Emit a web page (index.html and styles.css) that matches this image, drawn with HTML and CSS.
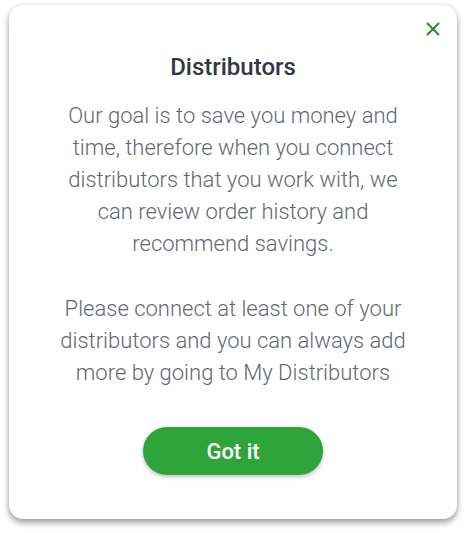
FILE: index.html
```html
<!DOCTYPE html>
<html lang="en">
    <head>
        <meta charset="UTF-8">
        <meta name="viewport" content="width=device-width, initial-scale=1.0">
        <title>Distributors</title>
        <link rel="stylesheet" href="styles.css">
    </head>
    <body>
        <div class="modal-card">
            <div class="modal-top">
                <button class="close-btn" aria-label="Close">
                    <svg width="14" height="14" viewBox="0 0 14 14">
                        <path d="M1 1 L13 13 M13 1 L1 13" stroke="#2e8b3a" stroke-width="2.2" fill="none"/>
                    </svg>
                </button>
            </div>
            <h1 class="modal-title">Distributors</h1>
            <p class="modal-text">Our goal is to save you money and time, therefore when you connect distributors that you work with, we can review order history and recommend savings.</p>
            <p class="modal-text">Please connect at least one of your distributors and you can always add more by going to My Distributors</p>
            <div class="modal-actions">
                <button class="got-it-btn">Got it</button>
            </div>
        </div>
    </body>
</html>
```

FILE: styles.css
```css
/* Global styles */
* {
    margin: 0;
    padding: 0;
    box-sizing: border-box;
    font-family: Roboto, Arial, sans-serif;
}

body {
    background-color: #fff;
    padding: 5px 9px 14px 9px;
}

.modal-card {
    background: #fff;
    border-radius: 14px;
    height: 514px;
    padding: 0 44px;
    box-shadow: 0 4px 6px rgba(0, 0, 0, 0.35), 0 0 4px rgba(0, 0, 0, 0.12);
    text-align: center;
}

.modal-top {
    display: flex;
    justify-content: flex-end;
    height: 47px;
    margin-right: -27px;
    padding-top: 17px;
}

.close-btn {
    background: none;
    border: none;
    width: 14px;
    height: 14px;
    cursor: pointer;
}

.close-btn svg {
    display: block;
}

.modal-title {
    color: #333644;
    font-size: 24px;
    font-weight: 500;
    line-height: 30px;
    margin-bottom: 18px;
}

.modal-text {
    color: #646772;
    font-size: 22px;
    font-weight: 300;
    line-height: 32px;
    margin-bottom: 33px;
}

.modal-actions {
    display: flex;
    justify-content: center;
    margin-top: 38px;
}

.got-it-btn {
    background: #2ea43a;
    color: #fff;
    border: none;
    border-radius: 24px;
    width: 180px;
    height: 48px;
    font-size: 22px;
    font-weight: 500;
    cursor: pointer;
    box-shadow: 0 2px 4px rgba(0, 0, 0, 0.25);
}
```
